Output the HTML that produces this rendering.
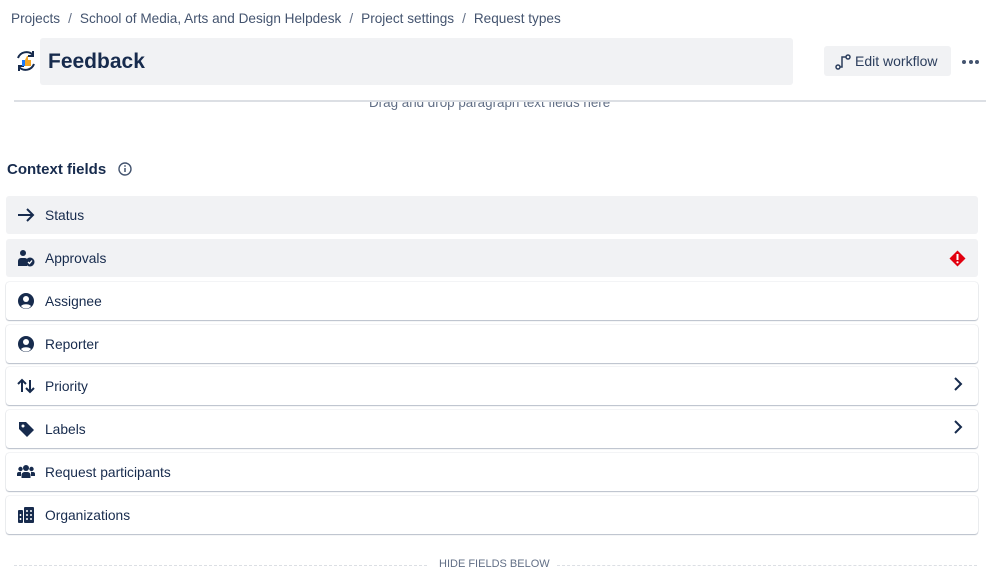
<!DOCTYPE html>
<html><head><meta charset="utf-8"><style>
*{box-sizing:border-box;margin:0;padding:0}
body{width:998px;height:573px;overflow:hidden;background:#fff;font-family:"Liberation Sans",sans-serif;color:#172b4d;position:relative}
.bc{position:absolute;top:11px;left:11px;font-size:13.6px;color:#44546f}
.bc span{margin:0 8px;color:#626f86}
.title{position:absolute;left:40px;top:38px;width:753px;height:47px;background:#f1f2f4;border-radius:3px;font-size:21px;font-weight:bold;padding:12px 8px;color:#172b4d}
.btn{position:absolute;left:824px;top:46px;width:127px;height:30px;background:#f1f2f4;border-radius:3px;font-size:14px;color:#2c3e5d;padding:7px 0 0 31px}
.dots{position:absolute;left:962px;top:60px;display:flex;gap:2.5px}
.dots i{display:block;width:4px;height:4px;border-radius:50%;background:#44546f}
.line{position:absolute;left:14px;top:100px;width:972px;height:2px;background:#dcdfe4}
.drag{position:absolute;left:0;top:102px;width:998px;height:8px;overflow:hidden}
.drag div{position:absolute;top:-7px;left:369px;font-size:13.4px;color:#626f86}
.ctx{position:absolute;left:7px;top:161px;font-size:15px;font-weight:bold;color:#172b4d}
.row{position:absolute;left:6px;width:972px;height:38px;border-radius:3px;font-size:13.8px;color:#172b4d;padding:12px 0 0 39px}
.g{background:#f1f2f4}
.w{background:#fff;box-shadow:0 1px 1px rgba(9,30,66,.25),0 0 1px rgba(9,30,66,.31)}
.row svg{position:absolute;left:11px;top:10px}
.chev{position:absolute;right:14px;top:12px}
.hide{position:absolute;top:558px;left:0;width:998px;font-size:11px;color:#626f86}
.dl{position:absolute;top:7px;height:0;border-top:1px dashed #dcdfe4}
</style></head><body>
<div class="bc">Projects<span>/</span>School of Media, Arts and Design Helpdesk<span>/</span>Project settings<span>/</span>Request types</div>
<svg style="position:absolute;left:14px;top:49px" width="24" height="24" viewBox="0 0 24 24"><path d="M4 9a9 9 0 0 1 15-3" fill="none" stroke="#172b4d" stroke-width="2"/><path d="M20 15a9 9 0 0 1-15 3" fill="none" stroke="#172b4d" stroke-width="2"/><path d="M19 2v5h-5" fill="none" stroke="#172b4d" stroke-width="2"/><path d="M5 22v-5h5" fill="none" stroke="#172b4d" stroke-width="2"/><rect x="8" y="11" width="3" height="6" fill="#1d7afc"/><path d="M11 11l2-4h1v4h3v6h-6z" fill="#f5a623"/></svg>
<div class="title">Feedback</div>
<div class="btn"><svg style="position:absolute;left:11px;top:8px" width="16" height="16" viewBox="0 0 16 16"><circle cx="3" cy="13" r="2" fill="none" stroke="#2c3e5d" stroke-width="1.5"/><circle cx="13" cy="3" r="2" fill="none" stroke="#2c3e5d" stroke-width="1.5"/><path d="M5 13h2V3h4" fill="none" stroke="#2c3e5d" stroke-width="1.5"/></svg>Edit workflow</div>
<div class="dots"><i></i><i></i><i></i></div>
<div class="line"></div>
<div class="drag"><div>Drag and drop paragraph text fields here</div></div>
<div class="ctx">Context fields</div>
<svg style="position:absolute;left:118px;top:162px" width="14" height="14" viewBox="0 0 14 14"><circle cx="7" cy="7" r="6" fill="none" stroke="#44546f" stroke-width="1.4"/><path d="M7 6v4" stroke="#44546f" stroke-width="1.5"/><circle cx="7" cy="4" r=".9" fill="#44546f"/></svg>

<div class="row g" style="top:196px"><svg width="18" height="18" viewBox="0 0 18 18"><path d="M1 9h15M10 3l6 6-6 6" fill="none" stroke="#172b4d" stroke-width="2"/></svg>Status</div>
<div class="row g" style="top:239px"><svg width="18" height="18" viewBox="0 0 18 18"><circle cx="6" cy="4" r="3" fill="#172b4d"/><path d="M1 17v-5a3 3 0 0 1 3-3h4a3 3 0 0 1 2 1v7z" fill="#172b4d"/><circle cx="13" cy="13" r="4.5" fill="#172b4d"/><path d="M11 13l1.5 1.5 2.5-3" fill="none" stroke="#fff" stroke-width="1.3"/></svg>Approvals<svg style="left:auto;right:12px;top:11px" width="17" height="17" viewBox="0 0 17 17"><path d="M8.5 0.5l8 8-8 8-8-8z" fill="#e2000f"/><path d="M8.5 4v6" stroke="#fff" stroke-width="2"/><circle cx="8.5" cy="12.3" r="1.1" fill="#fff"/></svg></div>
<div class="row w" style="top:282px"><svg width="18" height="18" viewBox="0 0 18 18"><circle cx="9" cy="9" r="8" fill="#172b4d"/><circle cx="9" cy="7" r="3" fill="#fff"/><path d="M4 14a6 4 0 0 1 10 0a6 6 0 0 1-10 0z" fill="#fff"/></svg>Assignee</div>
<div class="row w" style="top:325px"><svg width="18" height="18" viewBox="0 0 18 18"><circle cx="9" cy="9" r="8" fill="#172b4d"/><circle cx="9" cy="7" r="3" fill="#fff"/><path d="M4 14a6 4 0 0 1 10 0a6 6 0 0 1-10 0z" fill="#fff"/></svg>Reporter</div>
<div class="row w" style="top:367px"><svg width="18" height="18" viewBox="0 0 18 18"><path d="M5 15V3M1 7l4-4 4 4M13 3v12M9 11l4 4 4-4" fill="none" stroke="#172b4d" stroke-width="2"/></svg>Priority<svg class="chev" style="left:auto" width="12" height="14" viewBox="0 0 12 14"><path d="M3 1l6 6-6 6" fill="none" stroke="#172b4d" stroke-width="2"/></svg></div>
<div class="row w" style="top:410px"><svg width="18" height="18" viewBox="0 0 18 18"><path d="M2 2h7l8 8-7 7-8-8z" fill="#172b4d"/><circle cx="6" cy="6" r="1.5" fill="#fff"/></svg>Labels<svg class="chev" style="left:auto" width="12" height="14" viewBox="0 0 12 14"><path d="M3 1l6 6-6 6" fill="none" stroke="#172b4d" stroke-width="2"/></svg></div>
<div class="row w" style="top:453px"><svg width="18" height="18" viewBox="0 0 18 18"><circle cx="9" cy="5" r="3" fill="#172b4d"/><circle cx="3.5" cy="6" r="2.2" fill="#172b4d"/><circle cx="14.5" cy="6" r="2.2" fill="#172b4d"/><path d="M4.5 15v-3a3 3 0 0 1 3-3h3a3 3 0 0 1 3 3v3z" fill="#172b4d"/><path d="M0 13v-2a2 2 0 0 1 2-2h2v4zM18 13v-2a2 2 0 0 0-2-2h-2v4z" fill="#172b4d"/></svg>Request participants</div>
<div class="row w" style="top:496px"><svg width="18" height="18" viewBox="0 0 18 18"><rect x="1" y="4" width="5" height="13" rx="1" fill="#172b4d"/><rect x="7" y="1" width="10" height="16" rx="1" fill="#172b4d"/><path d="M10 4v2M14 4v2M10 8v2M14 8v2M10 12v2M14 12v2M3.5 8v2M3.5 12v2" stroke="#fff" stroke-width="1.5"/></svg>Organizations</div>

<div class="hide"><div class="dl" style="left:14px;width:413px"></div><div style="position:absolute;left:439px;top:0">HIDE FIELDS BELOW</div><div class="dl" style="left:557px;width:420px"></div></div>
</body></html>
